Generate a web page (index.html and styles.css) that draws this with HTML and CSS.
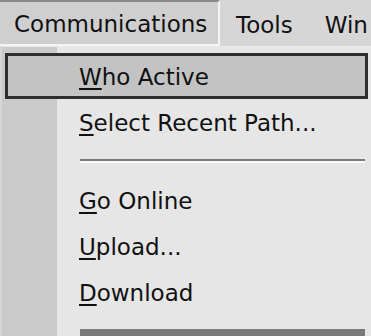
FILE: index.html
```html
<!DOCTYPE html>
<html lang="en">
<head>
    <meta charset="UTF-8">
    <title>Communications menu</title>
    <link rel="stylesheet" href="styles.css">
</head>
<body>
    <div class="menubar">
        <div class="menu-title open">Communications</div>
        <div class="menu-title">Tools</div>
        <div class="menu-title">Win</div>
    </div>
    <div class="dropdown">
        <div class="item active"><u>W</u>ho Active</div>
        <div class="item"><u>S</u>elect Recent Path...</div>
        <div class="separator"></div>
        <div class="item"><u>G</u>o Online</div>
        <div class="item"><u>U</u>pload...</div>
        <div class="item"><u>D</u>ownload</div>
        <div class="bottom-rule"></div>
    </div>
</body>
</html>
```

FILE: styles.css
```css
* {
    margin: 0;
    padding: 0;
    box-sizing: border-box;
}

body {
    font-family: "DejaVu Sans", Verdana, sans-serif;
    font-size: 23px;
    color: #111111;
    background-color: #d6d6d6;
    width: 371px;
    height: 336px;
    overflow: hidden;
}

.menubar {
    display: flex;
    height: 46px;
    background-color: #d6d6d6;
}

.menu-title {
    display: flex;
    align-items: center;
    padding-top: 4px;
    margin-left: 16px;
    white-space: nowrap;
}

.menu-title.open {
    width: 220px;
    margin-left: 0;
    padding-left: 14px;
    padding-top: 2px;
    background-color: #cfcfcf;
    border-top: 2px solid #8a8a8a;
    border-right: 2px solid #f4f4f4;
    border-bottom: 2px solid #f4f4f4;
}

.menu-title:last-child {
    margin-left: 32px;
}

.dropdown {
    margin-left: 2px;
    padding-top: 6px;
    border-top: 1px solid #ebebeb;
    background: linear-gradient(to right, #cacaca 0, #cacaca 55px, #e6e6e6 55px);
    height: 290px;
    overflow: hidden;
}

.item {
    height: 46px;
    margin: 0 3px 0 3px;
    padding-left: 71px;
    padding-top: 2px;
    border: 3px solid transparent;
    display: flex;
    align-items: center;
    white-space: nowrap;
}

.item.active {
    background-color: #c3c3c3;
    border-color: #2e2e2e;
}

.item u {
    text-decoration-thickness: 2px;
    text-underline-offset: 3px;
}

.separator {
    height: 32px;
    margin-left: 78px;
    margin-right: 6px;
    display: flex;
    flex-direction: column;
    justify-content: center;
}

.separator::before {
    content: "";
    height: 2px;
    background-color: #7a7a7a;
}

.separator::after {
    content: "";
    height: 2px;
    background-color: #fafafa;
}

.bottom-rule {
    height: 8px;
    margin: 14px 6px 0 78px;
    background-color: #7a7a7a;
}
```
